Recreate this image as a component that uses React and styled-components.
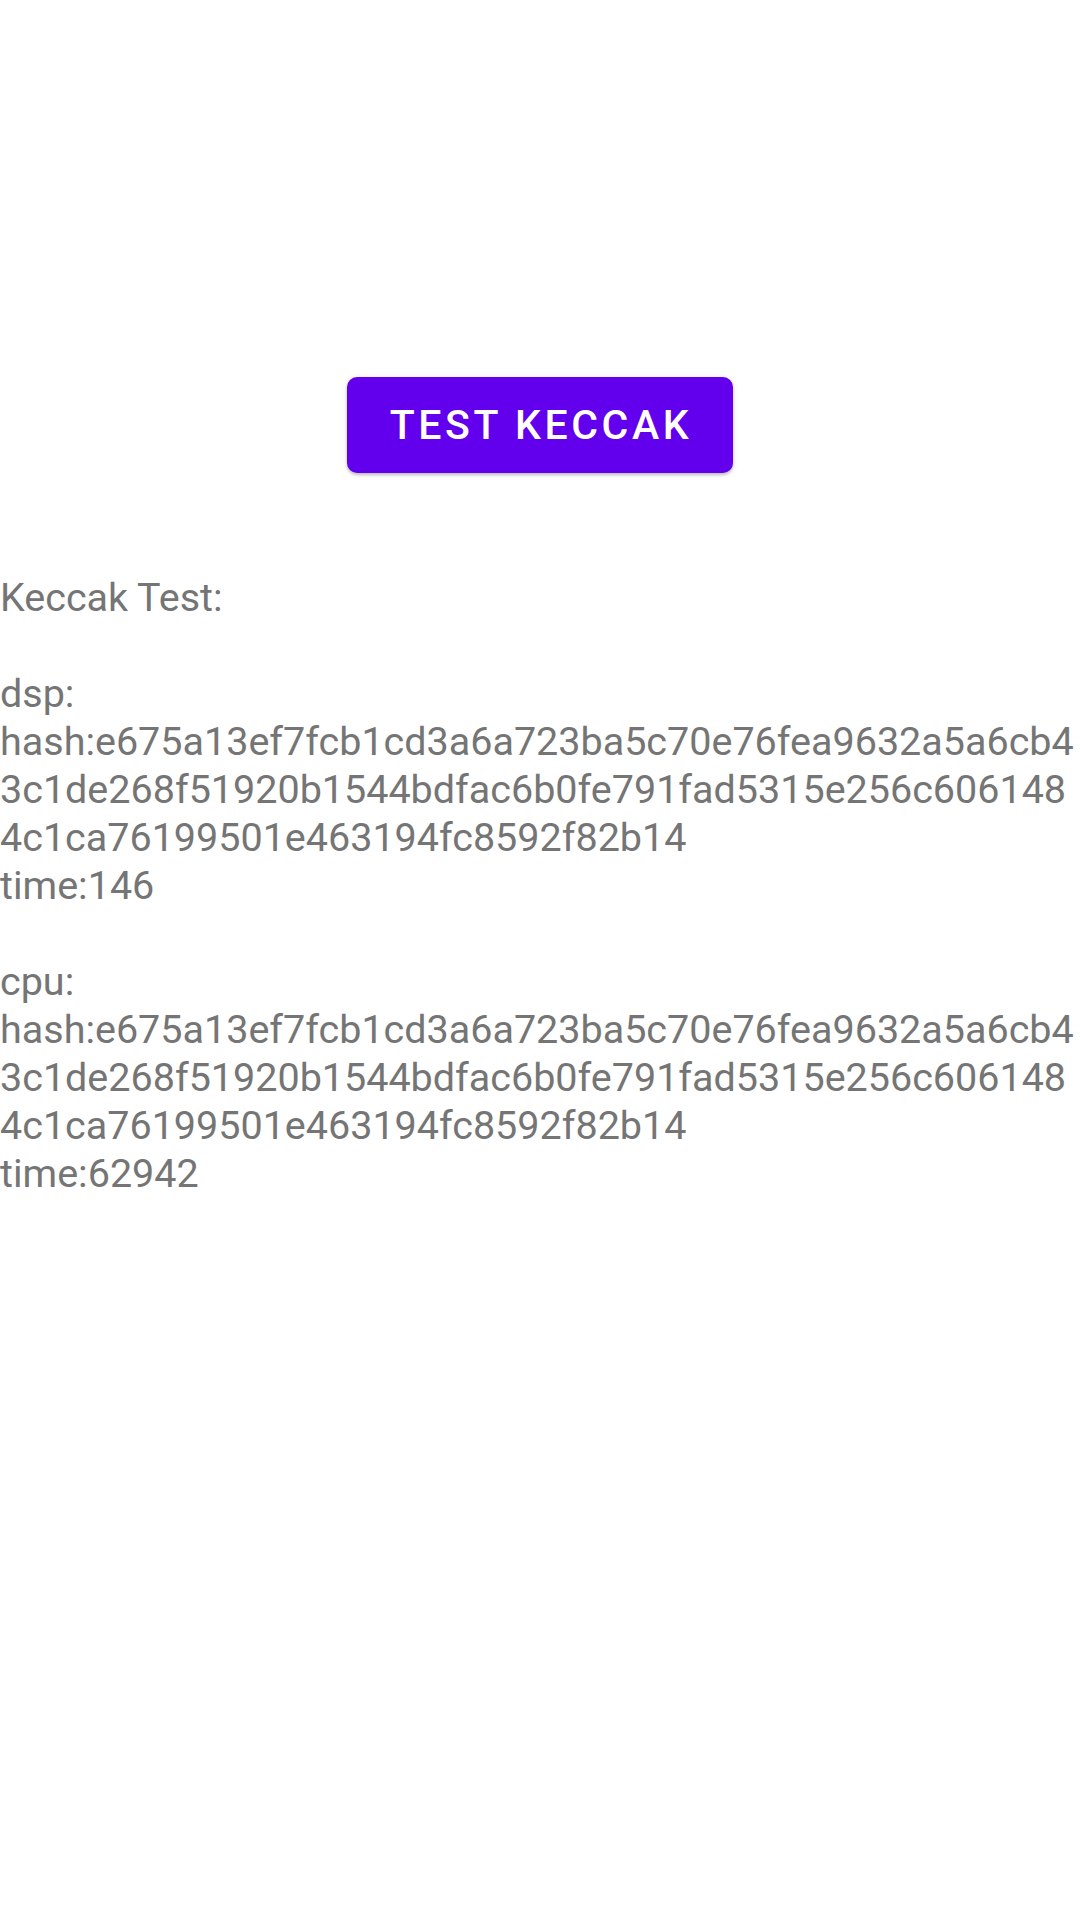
import React from 'react';
import styled, { createGlobalStyle } from 'styled-components';

const GlobalStyle = createGlobalStyle`
	html, body {
		margin: 0;
		padding: 0;
		background: #ffffff;
	}
	body {
		font-family: Roboto, "Noto Sans", "Liberation Sans", sans-serif;
	}
`

const Screen = styled.div`
	width: 1080px;
	min-height: 1920px;
	background: #ffffff;
	display: flex;
	flex-direction: column;
	padding-top: 377px;
	box-sizing: border-box;
`

const ButtonRow = styled.div`
	display: flex;
	justify-content: center;
`

const TestButton = styled.button`
	height: 96px;
	padding: 0 41px 0 43px;
	border: none;
	border-radius: 10px;
	background: #6200ee;
	color: #ffffff;
	font-family: Roboto, "Noto Sans", sans-serif;
	font-weight: 500;
	font-size: 41px;
	letter-spacing: 3.6px;
	text-transform: uppercase;
	box-shadow: 0 2px 3px rgba(0, 0, 0, 0.2), 0 1px 6px rgba(0, 0, 0, 0.1);
	cursor: pointer;
`

const Output = styled.div`
	margin-top: 101px;
	display: flex;
	flex-direction: column;
`

const Line = styled.div`
	height: 48px;
	line-height: 48px;
	font-family: Roboto, "Noto Sans", sans-serif;
	font-size: 39.5px;
	color: #757575;
	white-space: nowrap;
`

const results = [
	{
		label: 'dsp:',
		hash: [
			'e675a13ef7fcb1cd3a6a723ba5c70e76fea9632a5a6cb4',
			'3c1de268f51920b1544bdfac6b0fe791fad5315e256c606148',
			'4c1ca76199501e463194fc8592f82b14',
		],
		time: 146,
	},
	{
		label: 'cpu:',
		hash: [
			'e675a13ef7fcb1cd3a6a723ba5c70e76fea9632a5a6cb4',
			'3c1de268f51920b1544bdfac6b0fe791fad5315e256c606148',
			'4c1ca76199501e463194fc8592f82b14',
		],
		time: 62942,
	},
]

const ResultBlock = ({ label, hash, time }) => <>
	<Line>&nbsp;</Line>
	<Line>{label}</Line>
	<Line>hash:{hash[0]}</Line>
	<Line>{hash[1]}</Line>
	<Line>{hash[2]}</Line>
	<Line>time:{time}</Line>
</>

export default function App() {
	return <Screen>
		<GlobalStyle />
		<ButtonRow>
			<TestButton>Test Keccak</TestButton>
		</ButtonRow>
		<Output>
			<Line>Keccak Test:</Line>
			{results.map(r => <ResultBlock key={r.label} {...r} />)}
		</Output>
	</Screen>
}
